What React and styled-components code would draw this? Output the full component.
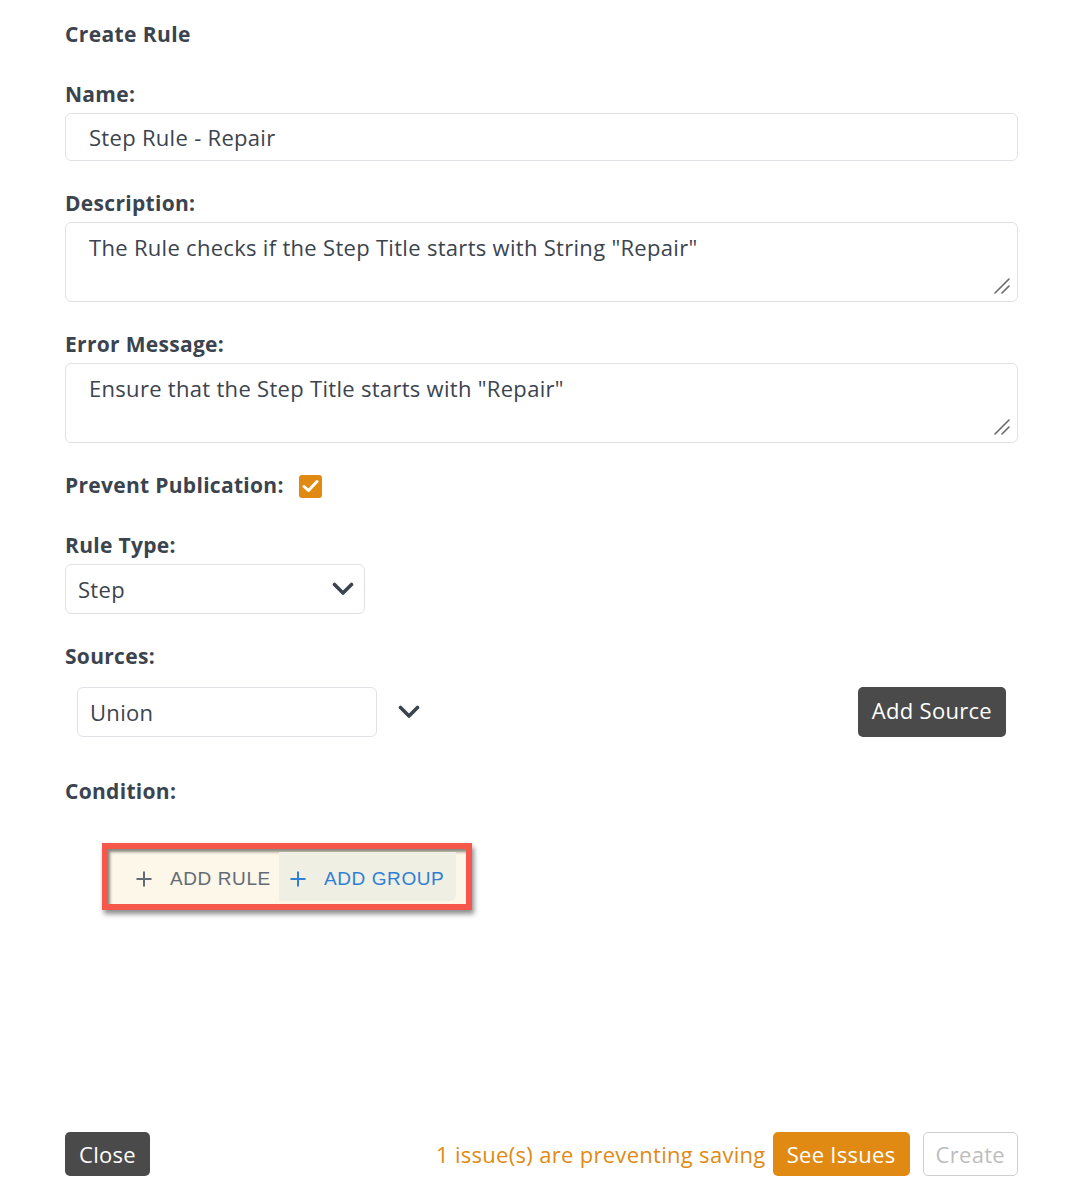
import React from 'react'
import styled, { createGlobalStyle } from 'styled-components'

const GlobalStyle = createGlobalStyle`
    html, body {
        margin: 0;
        padding: 0;
        background: #fff;
    }
    body {
        font-family: "Open Sans", Lato, "Liberation Sans", sans-serif;
        color: #3b444e;
    }
`

const Page = styled.div`
    min-height: 100vh;
    box-sizing: border-box;
    display: flex;
    flex-direction: column;
    padding: 22px 60px 16px 65px;
`

const Title = styled.h1`
    margin: 0 0 36px;
    font-size: 21px;
    line-height: 24px;
    letter-spacing: 0.4px;
    font-weight: 700;
`

const Field = styled.div`
    display: flex;
    flex-direction: column;
    margin-bottom: ${p => p.gap || 30}px;
`

const Label = styled.label`
    font-size: 21px;
    line-height: 24px;
    letter-spacing: 0.3px;
    font-weight: 700;
    margin-bottom: ${p => p.space || 7}px;
`

const TextInput = styled.input`
    box-sizing: border-box;
    height: 48px;
    width: 100%;
    border: 1px solid #e0e2e5;
    border-radius: 6px;
    padding: 0 23px;
    font: inherit;
    font-size: 22px;
    letter-spacing: 0.3px;
    color: #3b444e;
    outline: none;
`

const AreaWrap = styled.div`
    position: relative;
    display: flex;
`

const TextArea = styled.textarea`
    box-sizing: border-box;
    height: 80px;
    width: 100%;
    border: 1px solid #e0e2e5;
    border-radius: 6px;
    padding: 10px 23px;
    font: inherit;
    font-size: 22px;
    letter-spacing: 0.3px;
    line-height: 28px;
    color: #3b444e;
    outline: none;
    resize: none;
`

const Grip = styled.svg`
    position: absolute;
    right: 8px;
    bottom: 8px;
    pointer-events: none;
`

const CheckRow = styled.div`
    display: flex;
    align-items: center;
    gap: 15px;
    height: 24px;
    margin-bottom: 36px;

    ${Label} {
        margin: 0;
    }
`

const Check = styled.span`
    width: 23px;
    height: 23px;
    border-radius: 3px;
    background: #e08a14;
    display: flex;
    align-items: center;
    justify-content: center;
    margin-top: 2px;
`

const SelectBox = styled.div`
    box-sizing: border-box;
    width: ${p => p.width || 300}px;
    height: 50px;
    border: 1px solid #e0e2e5;
    border-radius: 6px;
    display: flex;
    align-items: center;
    justify-content: space-between;
    padding: 0 10px 0 12px;
    font-size: 22px;
    letter-spacing: 0.3px;
`

const SourceRow = styled.div`
    display: flex;
    align-items: center;
    padding-left: 12px;
    padding-right: 12px;
`

const Chevron = styled.svg`
    margin-left: ${p => p.offset || 0}px;
    flex: none;
`

const DarkButton = styled.button`
    font: inherit;
    font-size: 22px;
    letter-spacing: 0.3px;
    color: #fff;
    background: #4a4a4a;
    border: none;
    border-radius: 5px;
    padding: 0 ${p => p.tall ? 14 : 14}px;
    height: ${p => p.tall ? 50 : 44}px;
    cursor: pointer;
    margin-left: ${p => p.push ? 'auto' : '0'};
    padding-bottom: ${p => p.tall ? 4 : 0}px;
`

const Highlight = styled.div`
    align-self: flex-start;
    margin: 33px 0 0 37px;
    border: 6px solid #f5584a;
    box-shadow: 2px 4px 5px rgba(0, 0, 0, 0.45), inset 2px 3px 3px rgba(0, 0, 0, 0.45);
    background: #fcf7e8;
    display: flex;
    align-items: stretch;
    height: 67px;
    box-sizing: border-box;
    padding: 3px 10px 3px 28px;
`

const ActionButton = styled.button`
    font-family: "Liberation Sans", Arial, sans-serif;
    font-size: 19px;
    letter-spacing: 0.6px;
    border: none;
    background: ${p => p.active ? '#f0efe4' : 'transparent'};
    border-radius: 0 0 6px 0;
    color: ${p => p.active ? '#2f7fd6' : '#626b75'};
    display: flex;
    align-items: center;
    gap: 18px;
    padding: 4px ${p => p.active ? 12 : 8}px 0 ${p => p.active ? 11 : 0}px;
    cursor: pointer;
`

const Footer = styled.div`
    margin-top: auto;
    display: flex;
    align-items: center;
`

const Notice = styled.span`
    margin-left: auto;
    margin-right: 7px;
    font-size: 22px;
    letter-spacing: 0.3px;
    color: #e08a14;
`

const OrangeButton = styled(DarkButton)`
    background: #e08a14;
    margin-right: 13px;
`

const GhostButton = styled.button`
    font: inherit;
    font-size: 22px;
    letter-spacing: 0.3px;
    height: 44px;
    padding: 0 12px;
    background: #fff;
    color: #bdbdbd;
    border: 1px solid #cfcfcf;
    border-radius: 5px;
`

const ChevronIcon = ({ offset }) => (
    <Chevron offset={offset} width="22" height="14" viewBox="0 0 22 14">
        <polyline points="2.5,2.5 11,11 19.5,2.5" fill="none" stroke="#3b444e" strokeWidth="3.6" strokeLinecap="round" strokeLinejoin="round" />
    </Chevron>
)

const Plus = ({ color }) => (
    <svg width="16" height="16" viewBox="0 0 16 16">
        <path d="M8 0.5V15.5M0.5 8H15.5" stroke={color} strokeWidth="2" />
    </svg>
)

const Area = ({ value }) => (
    <AreaWrap>
        <TextArea readOnly value={value} />
        <Grip width="16" height="16" viewBox="0 0 16 16">
            <path d="M1 15L15 1M8 15L15 8" stroke="#6a6a6a" strokeWidth="1.6" strokeLinecap="round" />
        </Grip>
    </AreaWrap>
)

export default function App() {
    return (
        <Page>
            <GlobalStyle />
            <Title>Create Rule</Title>

            <Field>
                <Label>Name:</Label>
                <TextInput readOnly value="Step Rule - Repair" />
            </Field>

            <Field>
                <Label>Description:</Label>
                <Area value={'The Rule checks if the Step Title starts with String "Repair"'} />
            </Field>

            <Field>
                <Label>Error Message:</Label>
                <Area value={'Ensure that the Step Title starts with "Repair"'} />
            </Field>

            <CheckRow>
                <Label>Prevent Publication:</Label>
                <Check>
                    <svg width="17" height="14" viewBox="0 0 17 14">
                        <polyline points="2,7.5 6.5,11.5 15,2.5" fill="none" stroke="#fff" strokeWidth="3" strokeLinecap="round" strokeLinejoin="round" />
                    </svg>
                </Check>
            </CheckRow>

            <Field>
                <Label>Rule Type:</Label>
                <SelectBox width={300}>
                    Step
                    <ChevronIcon />
                </SelectBox>
            </Field>

            <Field gap={42}>
                <Label space={19}>Sources:</Label>
                <SourceRow>
                    <SelectBox width={300}>Union</SelectBox>
                    <ChevronIcon offset={21} />
                    <DarkButton tall push>Add Source</DarkButton>
                </SourceRow>
            </Field>

            <Label>Condition:</Label>

            <Highlight>
                <ActionButton>
                    <Plus color="#626b75" />
                    ADD RULE
                </ActionButton>
                <ActionButton active>
                    <Plus color="#2f7fd6" />
                    ADD GROUP
                </ActionButton>
            </Highlight>

            <Footer>
                <DarkButton>Close</DarkButton>
                <Notice>1 issue(s) are preventing saving</Notice>
                <OrangeButton>See Issues</OrangeButton>
                <GhostButton>Create</GhostButton>
            </Footer>
        </Page>
    )
}
